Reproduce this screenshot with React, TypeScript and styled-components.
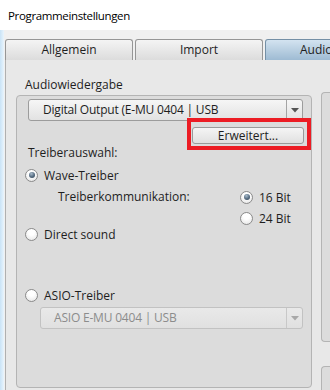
import React from "react";
import styled, { createGlobalStyle, css } from "styled-components";

const Global = createGlobalStyle`
  html, body { margin: 0; padding: 0; }
  body {
    width: 330px; height: 390px; overflow: hidden;
    font-family: "Open Sans", "Noto Sans", sans-serif;
    font-size: 12px; color: #1e1e1e; background: #f0f0f0;
  }
  * { box-sizing: border-box; }
`;

const Window = styled.div`
  width: 330px; height: 390px; display: flex; flex-direction: column; overflow: hidden;
`;

const TitleBar = styled.div`
  height: 30px; flex: none; background: #ffffff;
  padding: 2px 0 0 8px; line-height: 28px; color: #000;
  font-size: 11.5px; letter-spacing: -0.35px;
`;

const Body = styled.div`
  flex: 1; display: flex; min-height: 0;
`;

const Frame = styled.div`
  width: 4px; flex: none;
  background: linear-gradient(to right, #c9e3f6, #e9f4fc);
`;

const Content = styled.div`
  flex: 1; min-width: 0; display: flex; flex-direction: column;
  padding: 9px 0 0 1px; background: #f0f0f0;
`;

const TabRow = styled.div`
  display: flex; gap: 2px; height: 21px; flex: none;
`;

const Tab = styled.div<{ $active?: boolean; $pad?: number }>`
  width: 128px; flex: none;
  border: 1px solid #969696; border-bottom: none; border-radius: 3px 3px 0 0;
  background: linear-gradient(to bottom, #f4f4f4, #dcdcdc);
  line-height: 20px; text-align: center; color: #1e1e1e; white-space: nowrap;
  ${(p) => p.$active && css`
    border-color: #7590a6;
    background: linear-gradient(to bottom, #d3e3f0, #9ebbd3);
  `}
  ${(p) => p.$pad !== undefined && css`
    text-align: left; padding-left: ${p.$pad}px;
  `}
`;

const TabPanel = styled.div`
  flex: 1; display: flex; gap: 9px; min-height: 0;
  padding: 0 0 0 10px;
  border-left: 1px solid #b0b0b0; background: #e8e8e8;
`;

const GroupColumn = styled.div`
  width: 296px; flex: none; display: flex; flex-direction: column;
  padding: 17px 0 2px 0;
`;

const GroupLabel = styled.div`
  line-height: 16px; margin: 0 0 2px 9px;
`;

const GroupBox = styled.div`
  flex: 1; display: flex; flex-direction: column;
  border: 1px solid #b4b4b4; border-radius: 4px; background: #dcdcdc;
  padding: 3px 8px 0 8px;
`;

const RightColumn = styled.div`
  flex: 1; display: flex; flex-direction: column; gap: 24px;
  padding-top: 32px; margin-bottom: -20px;
`;

const SideBox = styled.div<{ $h?: number }>`
  border: 1px solid #b4b4b4; border-right: none; border-radius: 4px 0 0 4px;
  background: #dcdcdc;
  ${(p) => (p.$h ? css`height: ${p.$h}px; flex: none;` : css`flex: 1;`)}
`;

const Select = styled.div<{ $disabled?: boolean; $w: number; $ml: number; $mt?: number }>`
  display: flex; height: 22px; width: ${(p) => p.$w}px; flex: none;
  margin-left: ${(p) => p.$ml}px; margin-top: ${(p) => p.$mt ?? 0}px;
  border: 1px solid #9c9c9c; border-radius: 3px;
  background: linear-gradient(to bottom, #f6f6f6, #e2e2e2);
  color: #1e1e1e;
  ${(p) => p.$disabled && css`
    border-color: #c2c2c2;
    background: linear-gradient(to bottom, #e9e9e9, #e0e0e0);
    color: #8c8c8c;
  `}
`;

const SelectText = styled.div<{ $pad: number }>`
  flex: 1; min-width: 0; padding-left: ${(p) => p.$pad}px;
  line-height: 20px; white-space: nowrap; overflow: hidden; letter-spacing: -0.2px;
`;

const SelectArrow = styled.div<{ $disabled?: boolean }>`
  width: 16px; flex: none; display: flex; align-items: center; justify-content: center;
  border-left: 1px solid ${(p) => (p.$disabled ? "#c8c8c8" : "#a4a4a4")};
  color: ${(p) => (p.$disabled ? "#a8a8a8" : "#555555")};
`;

const ButtonRow = styled.div`
  display: flex; justify-content: flex-end; margin: 6px -1px 0 0;
`;

const Highlight = styled.div`
  position: relative; display: flex;
`;

const RedFrame = styled.div`
  position: absolute; left: -5px; right: -7px; top: -9px; bottom: -6px;
  border: 4px solid #ec1c24; pointer-events: none;
`;

const Button = styled.div`
  width: 112px; height: 17px;
  border: 1px solid #9a9a9a; border-radius: 3px;
  background: linear-gradient(to bottom, #f5f5f5, #e0e0e0);
  text-align: center; line-height: 15px; color: #1e1e1e;
`;

const Text = styled.div<{ $mt?: number; $ml?: number }>`
  line-height: 16px; white-space: nowrap;
  margin-top: ${(p) => p.$mt ?? 0}px; margin-left: ${(p) => p.$ml ?? 0}px;
`;

const RadioRow = styled.div<{ $mt?: number }>`
  display: flex; align-items: center; gap: 6px; height: 16px;
  margin-top: ${(p) => p.$mt ?? 0}px; white-space: nowrap;
`;

const RadioCircle = styled.span<{ $checked?: boolean }>`
  position: relative; width: 13px; height: 13px; flex: none; border-radius: 50%;
  border: 1px solid #8a8a8a;
  background: radial-gradient(circle at 50% 30%, #ffffff 30%, #e2e2e2 100%);
  ${(p) => p.$checked && css`
    &::after {
      content: ""; position: absolute; left: 2.5px; top: 2.5px; width: 6px; height: 6px;
      border-radius: 50%;
      background: radial-gradient(circle at 40% 30%, #a9bccc 0%, #556b80 55%, #2e4152 100%);
    }
  `}
`;

const BitGrid = styled.div`
  display: grid; grid-template-columns: 182px auto; row-gap: 5px;
  margin: 6px 0 0 33px;
`;

const Arrow = () => (
  <svg width="8" height="5" viewBox="0 0 8 5">
    <path d="M0 0 H8 L4 4.5 Z" fill="currentColor" />
  </svg>
);

const Radio = ({ label, checked, mt }: { label: string; checked?: boolean; mt?: number }) => (
  <RadioRow $mt={mt}>
    <RadioCircle $checked={checked} />
    <span>{label}</span>
  </RadioRow>
);

export default function App() {
  return (
    <>
      <Global />
      <Window>
        <TitleBar>Programmeinstellungen</TitleBar>
        <Body>
          <Frame />
          <Content>
            <TabRow>
              <Tab>Allgemein</Tab>
              <Tab>Import</Tab>
              <Tab $active $pad={34}>Audio</Tab>
            </TabRow>
            <TabPanel>
              <GroupColumn>
                <GroupLabel>Audiowiedergabe</GroupLabel>
                <GroupBox>
                  <Select $w={275} $ml={3}>
                    <SelectText $pad={14}>Digital Output (E-MU 0404 | USB</SelectText>
                    <SelectArrow><Arrow /></SelectArrow>
                  </Select>
                  <ButtonRow>
                    <Highlight>
                      <Button>Erweitert...</Button>
                      <RedFrame />
                    </Highlight>
                  </ButtonRow>
                  <Text $mt={1} $ml={3}>Treiberauswahl:</Text>
                  <Radio label="Wave-Treiber" checked mt={6} />
                  <BitGrid>
                    <Text>Treiberkommunikation:</Text>
                    <Radio label="16 Bit" checked />
                    <span />
                    <Radio label="24 Bit" />
                  </BitGrid>
                  <Radio label="Direct sound" />
                  <Radio label="ASIO-Treiber" mt={45} />
                  <Select $w={263} $ml={15} $mt={4} $disabled>
                    <SelectText $pad={13}>ASIO E-MU 0404 | USB</SelectText>
                    <SelectArrow $disabled><Arrow /></SelectArrow>
                  </Select>
                </GroupBox>
              </GroupColumn>
              <RightColumn>
                <SideBox $h={250} />
                <SideBox />
              </RightColumn>
            </TabPanel>
          </Content>
        </Body>
      </Window>
    </>
  );
}
